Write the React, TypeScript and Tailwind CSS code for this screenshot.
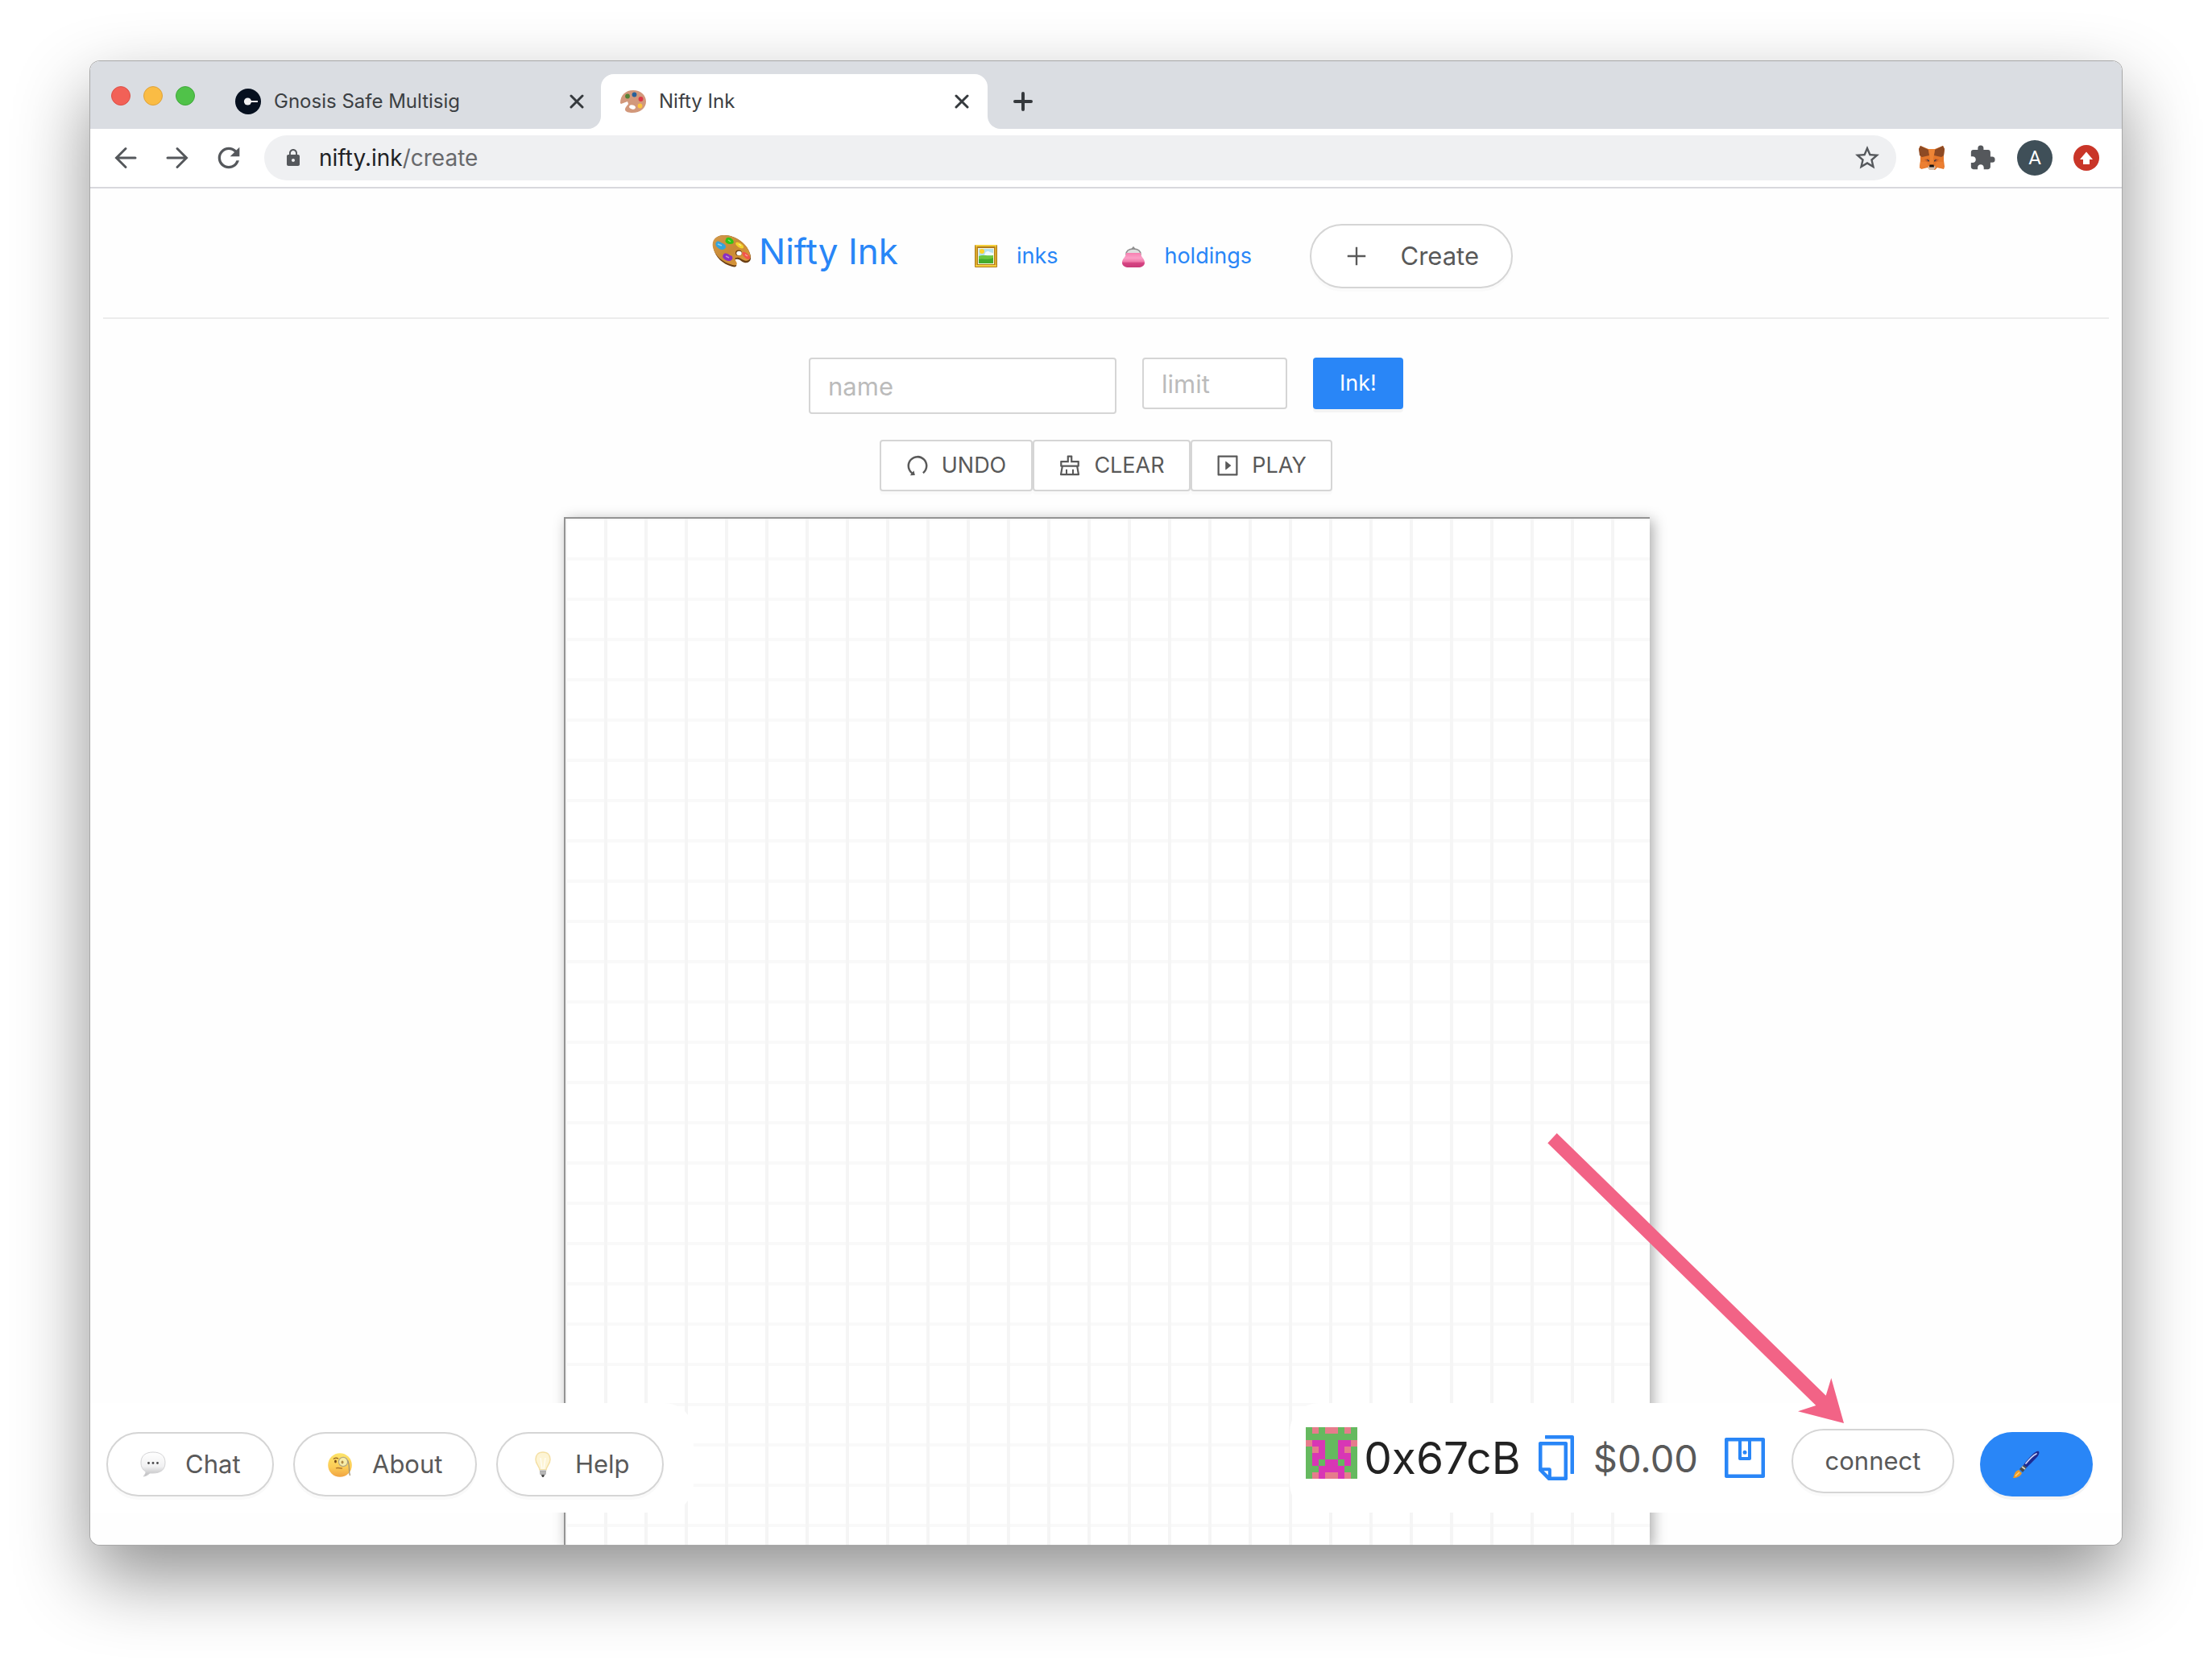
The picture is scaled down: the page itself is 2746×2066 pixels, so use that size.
import type { ReactNode } from "react";
import {
  AiOutlineClear,
  AiOutlineCopy,
  AiOutlinePlaySquare,
  AiOutlinePlus,
  AiOutlineUndo,
  AiOutlineWallet,
} from "react-icons/ai";
import { MdExtension, MdLock, MdRefresh, MdStarBorder } from "react-icons/md";

/* ---------- drawings ---------- */

function PaletteArt({ className }: { className: string }) {
  return (
    <svg viewBox="0 0 48 40" className={className} aria-hidden="true">
      <defs>
        <linearGradient id="wood" x1="0" y1="0" x2="1" y2="1">
          <stop offset="0" stopColor="#d39a4c" />
          <stop offset="0.5" stopColor="#c98a35" />
          <stop offset="1" stopColor="#e09c3c" />
        </linearGradient>
      </defs>
      <path
        d="M2 17C-1 6 6 0 15 0c14 0 30 11 33 26 1 6-3 9-8 8-4-1-6-5-10-4-4 0-1 4 0 6 1 3-1 4-5 3C13 36 4 27 2 17Z"
        fill="#6b3f14"
      />
      <path
        d="M1 15C-1 5 6 0 15 0c14 0 30 11 32.5 25 1 5-3 7.5-7 6.5-4-1-6-4.5-10-3.5-4 0-1 4 0 6 1 3-1 4-5 3C13 34 3 25 1 15Z"
        fill="url(#wood)"
      />
      <ellipse cx="33" cy="22" rx="4" ry="3.5" fill="#6b3f14" />
      <ellipse cx="33.5" cy="22.5" rx="3.2" ry="2.8" fill="#fff" />
      <path d="M5 9c2-3 4-1 6 0s7 3 6 6-5 4-8 2-6-5-4-8Z" fill="#33a4dc" />
      <path d="M17 5c1-3 5-3 8 0s2 6-2 6-8-2-6-6Z" fill="#31c416" />
      <path d="M30 9c2-1 8 2 9 5s-3 3-6 1-5-5-3-6Z" fill="#f5d32a" />
      <path d="M38 21c2-1 8 3 9 6s-2 4-5 2-6-7-4-8Z" fill="#f2544b" />
      <path d="M14 24c2-3 6-1 8 1 3 0 4 3 3 5s-5 3-8 1-5-4-3-7Z" fill="#8b2fc0" />
      <path
        d="M7 11l5 2M20 6l3 2M33 11l3 2M41 24l3 2M17 26l4 2"
        stroke="#fff"
        strokeOpacity=".45"
        strokeWidth="1.5"
        fill="none"
      />
    </svg>
  );
}

function TabPalette() {
  return (
    <svg viewBox="0 0 32 32" className="size-8 shrink-0" aria-hidden="true">
      <path d="M0 18C0 8 7 2 16 2s16 6 16 14-7 14-17 14c-4 0-9-1-9-4 0-3 3-5 4-7l-1-3-8 3Z" fill="#d2987b" />
      <ellipse cx="15" cy="23" rx="4" ry="2.5" fill="#fff" transform="rotate(15 15 23)" />
      <circle cx="9" cy="9.5" r="2.9" fill="#548236" />
      <circle cx="17.5" cy="7.5" r="2.9" fill="#27609b" />
      <circle cx="25.5" cy="13" r="2.9" fill="#dd3745" />
      <circle cx="24.5" cy="21.5" r="2.9" fill="#fcc53e" />
    </svg>
  );
}

function GnosisLogo() {
  return (
    <svg viewBox="0 0 32 32" className="size-8 shrink-0" aria-hidden="true">
      <circle cx="16" cy="16" r="16" fill="#06101f" />
      <circle cx="15.5" cy="16" r="4.6" fill="#f0f0f2" />
      <path d="M17 16h11" stroke="#f0f0f2" strokeWidth="2" />
    </svg>
  );
}

function FrameArt() {
  return (
    <svg viewBox="0 0 28 28" className="size-7 shrink-0" aria-hidden="true">
      <rect width="28" height="28" rx="1" fill="#b07c1c" />
      <path d="M1 0h26v2H1zM1 25h26v2H1z" fill="#f4cf3c" />
      <rect x="1" y="2" width="2" height="23" fill="#dba92a" />
      <rect x="25" y="2" width="2" height="23" fill="#dba92a" />
      <rect x="4" y="4" width="20" height="20" fill="#f9f5dc" />
      <rect x="5" y="5" width="18" height="10" fill="#b4e0f0" />
      <circle cx="9" cy="8" r="3" fill="#ffd42a" />
      <path d="M13 10c2-3 5-2 6-1s4 0 4 2v2H12Z" fill="#f2fafc" />
      <path d="M5 14c5-2 9 0 18-1v10H5Z" fill="#6cc83f" />
      <path d="M5 18c6-2 10 2 18-2v7H5Z" fill="#43ab2c" />
    </svg>
  );
}

function PurseArt() {
  return (
    <svg viewBox="0 0 28 28" className="size-7 shrink-0" aria-hidden="true">
      <defs>
        <linearGradient id="purse" x1="0" y1="0" x2="0" y2="1">
          <stop offset="0" stopColor="#f77fb1" />
          <stop offset="0.35" stopColor="#fb9fc6" />
          <stop offset="0.6" stopColor="#f07aaa" />
          <stop offset="0.7" stopColor="#d64483" />
          <stop offset="1" stopColor="#c93a78" />
        </linearGradient>
      </defs>
      <path d="M5 12c0-5 4-7 9-7s9 2 9 7Z" fill="#dedede" stroke="#8e8e8e" strokeWidth="1.5" />
      <path d="M12 5l3-2M16 5l-3-2" stroke="#8e8e8e" strokeWidth="1.8" />
      <path d="M5 10h18c0 5 5 7 5 12 0 4-4 6-8 6H8c-4 0-8-2-8-6 0-5 5-7 5-12Z" fill="url(#purse)" />
    </svg>
  );
}

function ChatArt() {
  return (
    <svg viewBox="0 0 32 32" className="size-8 shrink-0" aria-hidden="true">
      <defs>
        <linearGradient id="bubble" x1="0" y1="0" x2="0" y2="1">
          <stop offset="0" stopColor="#ffffff" />
          <stop offset="0.6" stopColor="#f1f1f2" />
          <stop offset="1" stopColor="#b9b9bb" />
        </linearGradient>
      </defs>
      <path
        d="M16 1c9 0 15 4 15 13s-6 13-15 13h-4c-2 2-5 4-8 4 2-2 3-4 3-6-4-2-6-6-6-11C1 5 7 1 16 1Z"
        fill="url(#bubble)"
        stroke="#d2d2d4"
      />
      <circle cx="10.5" cy="14.5" r="1.4" fill="#4a4a4c" />
      <circle cx="16" cy="14.5" r="1.4" fill="#4a4a4c" />
      <circle cx="21.5" cy="14.5" r="1.4" fill="#4a4a4c" />
    </svg>
  );
}

function MonocleArt() {
  return (
    <svg viewBox="0 0 32 32" className="size-8 shrink-0" aria-hidden="true">
      <defs>
        <linearGradient id="face" x1="0" y1="0" x2="0" y2="1">
          <stop offset="0" stopColor="#fde56a" />
          <stop offset="0.6" stopColor="#fccb55" />
          <stop offset="1" stopColor="#f0a342" />
        </linearGradient>
      </defs>
      <circle cx="16" cy="17" r="14.8" fill="url(#face)" />
      <path d="M8 9.5c2-2 4-1.5 6-.5" stroke="#8a5a1e" strokeWidth="1.3" fill="none" />
      <ellipse cx="10.5" cy="12.5" rx="1.4" ry="2" fill="#7a4a1a" />
      <circle cx="20" cy="13" r="5.6" fill="#f8eda8" stroke="#b3a984" strokeWidth="1.3" />
      <ellipse cx="19" cy="13.5" rx="1.5" ry="2" fill="#b08a48" />
      <path d="M25.5 11c3 5 1 13 3 19" stroke="#9b9177" strokeWidth="1.2" fill="none" />
      <path d="M11 21c3-1.5 5 .5 8 0" stroke="#b0762a" strokeWidth="1.3" fill="none" />
    </svg>
  );
}

function BulbArt() {
  return (
    <svg viewBox="0 0 32 32" className="size-8 shrink-0" aria-hidden="true">
      <path
        d="M16 1c6 0 9 4 9 9 0 6-4.5 8-5 13h-8c-.5-5-5-7-5-13 0-5 3-9 9-9Z"
        fill="#fdf4d4"
        stroke="#f4dfa4"
        strokeWidth="1.5"
      />
      <path d="M13 8l2 14M19 8l-2 14" stroke="#fffdf4" strokeWidth="1.5" />
      <path d="M12 23h8v5l-2 2h-4l-2-2Z" fill="#c6c6c6" />
      <path d="M12 25.5h8M12.5 28h7" stroke="#9a9a9a" />
      <path d="M14 29h4l-1 3h-2Z" fill="#4b4b4b" />
    </svg>
  );
}

function BrushArt() {
  return (
    <svg viewBox="0 0 34 34" className="size-[34px] shrink-0" aria-hidden="true">
      <path d="M33 1c1 2 0 5-4 9-4 4-8 8-11 11l-4-3c3-5 7-9 11-13 3-3 6-5 8-4Z" fill="#1d2b92" />
      <path d="M30 4c-4 2-9 7-13 12" stroke="#c9d2f5" strokeWidth="1.8" fill="none" strokeLinecap="round" />
      <path d="M14 18l4 3-5 6-4-4Z" fill="#4d4c4a" />
      <path d="M12 20l4 3" stroke="#d6d3c7" strokeWidth="1.8" />
      <path d="M8 24l4 4c-2 4-6 6-11 6 2-3 1-8 7-10Z" fill="#ef9a26" />
      <path d="M4 32c1-2 3-3 5-5" stroke="#fbd07a" strokeWidth="1.5" fill="none" />
    </svg>
  );
}

function FoxLogo() {
  return (
    <svg viewBox="0 0 32 30" className="h-[30px] w-8" aria-hidden="true">
      <path d="M2 0l10 4h8l10-4 2 4-1 8 0 6 1 8-1 3-8-2-3 3h-6l-3-3-8 2-2-3 1-8V12L0 4Z" fill="#e4772b" />
      <path d="M2 0l10 5 1 7-9 2-3-2L0 4Z" fill="#8d4a24" />
      <path d="M30 0L20 5l-1 7 9 2 3-2 1-8Z" fill="#8d4a24" />
      <path d="M12 4h8l-2 12v8h-4v-8Z" fill="#ee8536" />
      <path d="M2 20l8 0 2 5-3 2-8 1ZM30 20l-8 0-2 5 3 2 8 1Z" fill="#ec7f32" />
      <path d="M7 17l5-1 1 4-3 0ZM25 17l-5-1-1 4 3 0Z" fill="#c8602a" />
      <path d="M9.5 17l3.5 1-.5 1.8ZM22.5 17l-3.5 1 .5 1.8Z" fill="#243447" />
      <path d="M11 26l2-1h6l2 1-2 4h-6Z" fill="#cfc0b3" />
      <path d="M13.5 23.5h5l.5 3h-6Z" fill="#17110f" />
    </svg>
  );
}

const BLOCKIE_ROWS = [
  "gpgppgpg",
  "gggggggg",
  "pmmggmmp",
  "gpmggmpg",
  "gmmggmmg",
  "gmgmmgmg",
  "ggmmmmgg",
  "gpmppmpg",
];
const BLOCKIE_COLORS: Record<string, string> = { g: "#65b95f", p: "#e67c8c", m: "#d836b5" };

function Blockie() {
  return (
    <svg viewBox="0 0 8 8" className="size-16" shapeRendering="crispEdges" role="img" aria-label="Account avatar">
      {BLOCKIE_ROWS.flatMap((row, y) =>
        row.split("").map((cell, x) => (
          <rect key={`${x}-${y}`} x={x} y={y} width="1" height="1" fill={BLOCKIE_COLORS[cell]} />
        )),
      )}
    </svg>
  );
}

function CloseIcon() {
  return (
    <svg viewBox="0 0 18 18" className="size-[18px]" aria-hidden="true">
      <path d="M2 2l14 14M16 2L2 16" stroke="#35393d" strokeWidth="3" strokeLinecap="round" />
    </svg>
  );
}

function ArrowIcon({ flip = false }: { flip?: boolean }) {
  return (
    <svg viewBox="0 0 28 28" className={flip ? "size-7 -scale-x-100" : "size-7"} aria-hidden="true">
      <path d="M26 14H3M14 2.5L2.5 14 14 25.5" stroke="#55585c" strokeWidth="3" fill="none" strokeLinecap="round" />
    </svg>
  );
}

/* ---------- browser chrome ---------- */

function TabStrip() {
  return (
    <div className="flex h-[84px] items-end bg-[#dadde2] pl-[26px]">
      <div className="flex h-full items-center gap-4 pt-0.5">
        <button aria-label="Close window" className="size-6 rounded-full border border-[#dd4f46] bg-[#f26157]" />
        <button aria-label="Minimize window" className="size-6 rounded-full border border-[#dea23a] bg-[#fabc44]" />
        <button aria-label="Zoom window" className="size-6 rounded-full border border-[#3fa83a] bg-[#50c249]" />
      </div>
      <div className="ml-[50px] flex h-[68px] w-[454px] items-center pr-[21px]">
        <GnosisLogo />
        <span className="ml-4 flex-1 text-2xl text-[#3c4043]">Gnosis Safe Multisig</span>
        <button aria-label="Close tab">
          <CloseIcon />
        </button>
      </div>
      <div className="relative flex h-[68px] w-[480px] items-center rounded-t-2xl bg-white pr-[23px] pl-6">
        <span className="absolute bottom-0 -left-4 size-4 overflow-hidden">
          <span className="absolute right-0 bottom-0 size-8 rounded-full shadow-[0_0_0_16px_#fff]" />
        </span>
        <span className="absolute -right-4 bottom-0 size-4 overflow-hidden">
          <span className="absolute bottom-0 left-0 size-8 rounded-full shadow-[0_0_0_16px_#fff]" />
        </span>
        <TabPalette />
        <span className="ml-4 flex-1 text-2xl text-[#3c4043]">Nifty Ink</span>
        <button aria-label="Close tab">
          <CloseIcon />
        </button>
      </div>
      <button aria-label="New tab" className="ml-8 flex h-[68px] items-center">
        <svg viewBox="0 0 24 24" className="size-6" aria-hidden="true">
          <path d="M12 2v20M2 12h20" stroke="#35393d" strokeWidth="4" strokeLinecap="round" />
        </svg>
      </button>
    </div>
  );
}

function Toolbar() {
  return (
    <div className="flex h-[74px] items-center border-b-2 border-[#d8d8dd] bg-white pr-7 pl-[30px]">
      <button aria-label="Back">
        <ArrowIcon />
      </button>
      <button aria-label="Forward" className="ml-9">
        <ArrowIcon flip />
      </button>
      <button aria-label="Reload" className="ml-[30px]">
        <MdRefresh className="size-10 text-[#55585c]" />
      </button>
      <div className="ml-6 flex h-14 flex-1 items-center rounded-full bg-[#eff0f2] pr-[18px] pl-6">
        <MdLock className="size-6 text-[#55585c]" />
        <span className="ml-5 flex-1 text-[28px] text-[#202124]">
          nifty.ink<span className="text-[#68696c]">/create</span>
        </span>
        <button aria-label="Bookmark">
          <MdStarBorder className="size-9 text-[#55585c]" />
        </button>
      </div>
      <div className="ml-7 flex items-center">
        <FoxLogo />
        <MdExtension className="ml-[30px] size-[34px] text-[#55585c]" />
        <span className="ml-[26px] flex size-11 items-center justify-center rounded-full bg-[#3f4f58] font-[Roboto] text-2xl text-white">
          A
        </span>
        <svg viewBox="0 0 32 32" className="ml-[26px] size-8" aria-hidden="true">
          <circle cx="16" cy="16" r="16" fill="#c93528" />
          <path d="M16 8.5l8 9.5h-4v6h-8v-6H8Z" fill="#fff" />
        </svg>
      </div>
    </div>
  );
}

/* ---------- page ---------- */

function PageHeader() {
  return (
    <header className="mx-4 flex h-[162px] justify-center border-b-2 border-[#ececec] pt-11 pl-4">
      <div className="flex h-20 w-[994px] items-center">
        <a href="#home" className="flex items-center gap-2.5 pb-3 text-[44px] text-[#2986f7]">
          <PaletteArt className="h-10 w-12" />
          Nifty Ink
        </a>
        <a href="#inks" className="ml-auto flex items-center gap-6 text-[27px] text-[#2986f7]">
          <FrameArt />
          inks
        </a>
        <a href="#holdings" className="mr-[72px] ml-20 flex items-center gap-6 text-[27px] text-[#2986f7]">
          <PurseArt />
          holdings
        </a>
        <PillButton className="w-[252px] justify-between pr-10 pl-10">
          <AiOutlinePlus className="size-8" />
          Create
        </PillButton>
      </div>
    </header>
  );
}

function PillButton({ className, children }: { className: string; children: ReactNode }) {
  return (
    <button
      className={`flex h-20 items-center rounded-full border-2 border-[#d5d5d5] bg-white text-[31px] text-[#595959] shadow-[0_4px_0_#fafafa] ${className}`}
    >
      {children}
    </button>
  );
}

function ToolButton({ className, icon, label }: { className: string; icon: ReactNode; label: string }) {
  return (
    <button
      className={`flex h-16 items-center justify-center gap-3.5 rounded-sm border-2 border-[#d5d5d5] bg-white pr-0.5 text-[27px] text-[#595959] shadow-[0_4px_0_#fafafa] ${className}`}
    >
      {icon}
      {label}
    </button>
  );
}

function InkForm() {
  return (
    <form className="flex items-start justify-center gap-8 pt-12">
      <input
        aria-label="name"
        placeholder="name"
        className="h-[70px] w-[382px] rounded-sm border-2 border-[#d5d5d5] bg-white px-[22px] text-[31px] placeholder:text-[#bbbbbb]"
      />
      <input
        aria-label="limit"
        placeholder="limit"
        className="h-16 w-[180px] rounded-sm border-2 border-[#d5d5d5] bg-white px-[22px] text-[31px] placeholder:text-[#bbbbbb]"
      />
      <button type="button" className="h-16 w-28 rounded-sm bg-[#2986f7] text-[27px] text-white shadow-[0_4px_0_#f4f4f4]">
        Ink!
      </button>
    </form>
  );
}

function Workspace() {
  return (
    <main className="flex flex-1 flex-col items-center">
      <InkForm />
      <div className="mt-8 flex">
        <ToolButton className="w-[190px]" icon={<AiOutlineUndo className="size-8" />} label="UNDO" />
        <ToolButton className="w-[196px]" icon={<AiOutlineClear className="size-8" />} label="CLEAR" />
        <ToolButton className="w-44" icon={<AiOutlinePlaySquare className="size-8" />} label="PLAY" />
      </div>
      <div
        aria-label="Drawing canvas"
        className="mt-8 ml-0.5 w-[1348px] flex-1 border-t-2 border-l-2 border-[#939393] bg-white bg-[linear-gradient(to_right,#f5f5f5_2px,transparent_2px,transparent_48px,#f5f5f5_48px),linear-gradient(to_bottom,#f9f9f9_2px,transparent_2px,transparent_48px,#f9f9f9_48px)] bg-[size:50px_50px] shadow-[4px_4px_16px_#aaa]"
      />
    </main>
  );
}

function BottomBars() {
  return (
    <div className="absolute inset-x-0 bottom-10 flex h-[136px] items-start justify-between">
      <div className="flex h-full w-[749px] items-start gap-6 rounded-r-[36px] bg-white pt-9 pl-5">
        <PillButton className="w-[208px] gap-6 pl-10">
          <ChatArt />
          Chat
        </PillButton>
        <PillButton className="w-[228px] gap-6 pl-10">
          <MonocleArt />
          About
        </PillButton>
        <PillButton className="w-[208px] gap-6 pl-10">
          <BulbArt />
          Help
        </PillButton>
      </div>
      <div className="flex h-full items-start rounded-l-[36px] bg-white pr-9 pl-5">
        <div className="mt-[30px] flex h-16 items-center">
          <Blockie />
          <span className="mt-3 ml-2 text-[55px] leading-none text-[#222222]">0x67cB</span>
        </div>
        <button aria-label="Copy address" className="mt-9 ml-3 text-[#2986f7]">
          <AiOutlineCopy className="size-16" />
        </button>
        <span className="mt-[45px] ml-3.5 text-[47px] leading-none text-[#595959]">$0.00</span>
        <button aria-label="Wallet" className="mt-9 ml-[26px] text-[#2986f7]">
          <AiOutlineWallet className="size-16 -rotate-90" />
        </button>
        <PillButton className="mt-8 ml-[26px] w-[202px] justify-center">connect</PillButton>
        <button
          aria-label="Draw"
          className="mt-9 ml-8 flex h-20 w-[140px] items-center rounded-full bg-[#2986f7] pl-10 shadow-[0_4px_0_#f4f4f4]"
        >
          <BrushArt />
        </button>
      </div>
    </div>
  );
}

function PointerArrow() {
  return (
    <svg
      viewBox="0 0 368 360"
      className="pointer-events-none absolute right-[345px] bottom-[151px] h-[360px] w-[368px]"
      aria-hidden="true"
    >
      <path d="M11.7 0L345.7 325.7 352.3 304 368 360 311 345.3 333.3 338 .3 12.3Z" fill="#f26386" />
    </svg>
  );
}

export default function App() {
  return (
    <div className="flex min-h-screen bg-white px-28 pt-[76px] pb-[148px] font-[Inter,Roboto,sans-serif]">
      <div className="flex flex-1 rounded-xl shadow-[0_0_0_1px_#a8a8a8,0_40px_92px_rgba(0,0,0,0.44)]">
        <div className="relative flex flex-1 flex-col overflow-hidden rounded-xl bg-[#fefefe]">
          <TabStrip />
          <Toolbar />
          <PageHeader />
          <Workspace />
          <BottomBars />
          <PointerArrow />
        </div>
      </div>
    </div>
  );
}
